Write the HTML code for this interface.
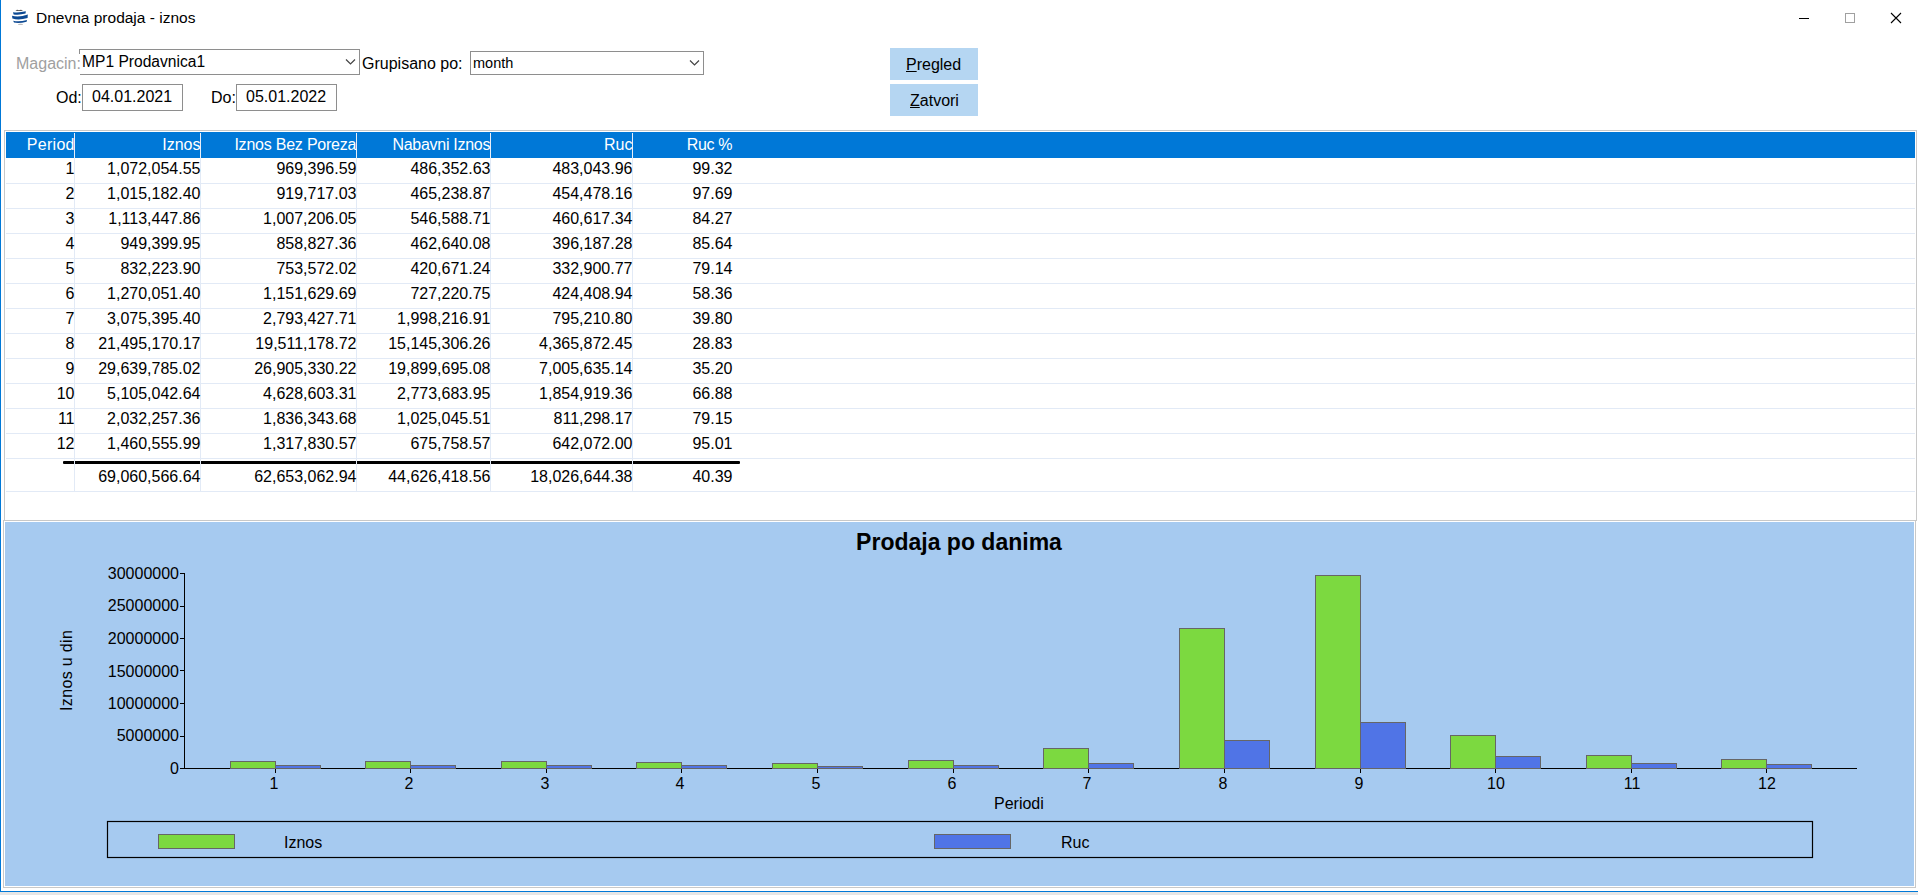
<!DOCTYPE html><html><head><meta charset="utf-8"><style>
*{margin:0;padding:0;box-sizing:border-box}
html,body{width:1918px;height:895px;overflow:hidden;background:#fff}
body{position:relative;font-family:"Liberation Sans",sans-serif;color:#000}
.a{position:absolute;white-space:nowrap}
.t{position:absolute;white-space:nowrap;font-size:16px;line-height:20px}
.r{text-align:right}
.hd{color:#fff}

</style></head><body>
<div class="a" style="left:0;top:0;width:1px;height:892px;background:#0078d7"></div>
<div class="a" style="left:0;top:891px;width:1918px;height:1px;background:#0078d7"></div>
<div class="a" style="left:0;top:892px;width:1918px;height:3px;background:#e6e6e6"></div>
<svg class="a" style="left:8px;top:6px" width="24" height="24" viewBox="0 0 24 24">
<defs><filter id="bl"><feGaussianBlur stdDeviation="0.35"/></filter></defs>
<g filter="url(#bl)">
<path d="M7.4 4.4 Q9 3.4 11 4.2 Q13 3.2 15 4.4 Q11.2 5.4 7.4 4.4Z" fill="#555"/>
<path d="M5 6.2 Q11 7.0 17.8 5.3 L17.6 7.6 Q11 9.4 5.6 8.4 Z" fill="#0b4a93"/>
<path d="M4 9.8 Q11 11.6 19.8 8.6 L19.6 12.0 Q11 14.6 4.4 12.6 Z" fill="#0b4a93"/>
<path d="M5.2 14.8 Q11 16.2 19 14.0 L18.6 15.8 Q11 17.8 6 16.6 Z" fill="#0b4a93"/>
<ellipse cx="12.5" cy="18.3" rx="2.6" ry="0.5" fill="#aaa"/>
</g></svg>
<div class="t" style="left:36px;top:8px;font-size:15.5px">Dnevna prodaja - iznos</div>
<div class="a" style="left:1799px;top:18px;width:10px;height:1px;background:#000"></div>
<div class="a" style="left:1845px;top:13px;width:10px;height:10px;border:1px solid #a0a0a0"></div>
<svg class="a" style="left:1890px;top:12px" width="12" height="12" viewBox="0 0 12 12"><path d="M1 1L11 11M11 1L1 11" stroke="#000" stroke-width="1.1"/></svg>
<div class="a" style="left:79px;top:49px;width:281px;height:26px;border:1px solid #8e8e8e;background:#fff"></div>
<div class="a" style="left:79px;top:54px;width:1px;height:21px;background:#fff"></div>
<div class="t" style="left:16px;top:54px;color:#a0a0a0">Magacin:</div>
<div class="t" style="left:82px;top:52px;font-size:15.6px">MP1 Prodavnica1</div>
<svg class="a" style="left:345px;top:58px" width="12" height="8"><path d="M1 1.5L5.5 6L10 1.5" fill="none" stroke="#444" stroke-width="1.2"/></svg>
<div class="t" style="left:362px;top:54px">Grupisano po:</div>
<div class="a" style="left:470px;top:51px;width:234px;height:24px;border:1px solid #8e8e8e;background:#fff"></div>
<div class="t" style="left:473px;top:53px;font-size:14.5px">month</div>
<svg class="a" style="left:689px;top:59px" width="12" height="8"><path d="M1 1.5L5.5 6L10 1.5" fill="none" stroke="#444" stroke-width="1.2"/></svg>
<div class="a" style="left:890px;top:48px;width:88px;height:32px;background:#b5d6f2"></div>
<div class="a" style="left:890px;top:84px;width:88px;height:32px;background:#b5d6f2"></div>
<div class="t" style="left:906px;top:55px"><u>P</u>regled</div>
<div class="t" style="left:910px;top:91px"><u>Z</u>atvori</div>
<div class="t" style="left:56px;top:88px">Od:</div>
<div class="a" style="left:82px;top:84px;width:101px;height:27px;border:1px solid #8e8e8e"></div>
<div class="t" style="left:92px;top:87px">04.01.2021</div>
<div class="t" style="left:211px;top:88px">Do:</div>
<div class="a" style="left:236px;top:84px;width:101px;height:27px;border:1px solid #8e8e8e"></div>
<div class="t" style="left:246px;top:87px">05.01.2022</div>
<div class="a" style="left:4px;top:130px;width:1913px;height:391px;border:1px solid #c8c8c8;background:#fff"></div>
<div class="a" style="left:6px;top:132px;width:1909px;height:26px;background:#0078d7"></div>
<div class="a" style="left:74px;top:133px;width:1px;height:25px;background:#e8eef8"></div>
<div class="a" style="left:74px;top:158px;width:1px;height:333px;background:#e2eaf6"></div>
<div class="a" style="left:200px;top:133px;width:1px;height:25px;background:#e8eef8"></div>
<div class="a" style="left:200px;top:158px;width:1px;height:333px;background:#e2eaf6"></div>
<div class="a" style="left:356px;top:133px;width:1px;height:25px;background:#e8eef8"></div>
<div class="a" style="left:356px;top:158px;width:1px;height:333px;background:#e2eaf6"></div>
<div class="a" style="left:490px;top:133px;width:1px;height:25px;background:#e8eef8"></div>
<div class="a" style="left:490px;top:158px;width:1px;height:333px;background:#e2eaf6"></div>
<div class="a" style="left:632px;top:133px;width:1px;height:25px;background:#e8eef8"></div>
<div class="a" style="left:632px;top:158px;width:1px;height:333px;background:#e2eaf6"></div>
<div class="a" style="left:6px;top:183px;width:1909px;height:1px;background:#e2eaf6"></div>
<div class="a" style="left:6px;top:208px;width:1909px;height:1px;background:#e2eaf6"></div>
<div class="a" style="left:6px;top:233px;width:1909px;height:1px;background:#e2eaf6"></div>
<div class="a" style="left:6px;top:258px;width:1909px;height:1px;background:#e2eaf6"></div>
<div class="a" style="left:6px;top:283px;width:1909px;height:1px;background:#e2eaf6"></div>
<div class="a" style="left:6px;top:308px;width:1909px;height:1px;background:#e2eaf6"></div>
<div class="a" style="left:6px;top:333px;width:1909px;height:1px;background:#e2eaf6"></div>
<div class="a" style="left:6px;top:358px;width:1909px;height:1px;background:#e2eaf6"></div>
<div class="a" style="left:6px;top:383px;width:1909px;height:1px;background:#e2eaf6"></div>
<div class="a" style="left:6px;top:408px;width:1909px;height:1px;background:#e2eaf6"></div>
<div class="a" style="left:6px;top:433px;width:1909px;height:1px;background:#e2eaf6"></div>
<div class="a" style="left:6px;top:458px;width:1909px;height:1px;background:#e2eaf6"></div>
<div class="a" style="left:6px;top:491px;width:1909px;height:1px;background:#e2eaf6"></div>
<div class="a" style="left:63px;top:461px;width:677px;height:3px;background:#000;border-radius:1px"></div>
<div class="a" style="left:74px;top:461px;width:1px;height:3px;background:#e2eaf6"></div>
<div class="a" style="left:200px;top:461px;width:1px;height:3px;background:#e2eaf6"></div>
<div class="a" style="left:356px;top:461px;width:1px;height:3px;background:#e2eaf6"></div>
<div class="a" style="left:490px;top:461px;width:1px;height:3px;background:#e2eaf6"></div>
<div class="a" style="left:632px;top:461px;width:1px;height:3px;background:#e2eaf6"></div>
<div class="t r hd" style="left:-200px;top:135px;width:274.8px;letter-spacing:0.3px">Period</div>
<div class="t r hd" style="left:-126px;top:135px;width:326.5px">Iznos</div>
<div class="t r hd" style="left:0px;top:135px;width:356.28px;letter-spacing:-0.22px">Iznos Bez Poreza</div>
<div class="t r hd" style="left:156px;top:135px;width:334.22px;letter-spacing:-0.28px">Nabavni Iznos</div>
<div class="t r hd" style="left:290px;top:135px;width:342.5px">Ruc</div>
<div class="t r hd" style="left:432px;top:135px;width:300.16px;letter-spacing:-0.34px">Ruc %</div>
<div class="t r " style="left:-200px;top:159px;width:274.5px">1</div>
<div class="t r " style="left:-126px;top:159px;width:326.5px">1,072,054.55</div>
<div class="t r " style="left:0px;top:159px;width:356.5px">969,396.59</div>
<div class="t r " style="left:156px;top:159px;width:334.5px">486,352.63</div>
<div class="t r " style="left:290px;top:159px;width:342.5px">483,043.96</div>
<div class="t r " style="left:432px;top:159px;width:300.5px">99.32</div>
<div class="t r " style="left:-200px;top:184px;width:274.5px">2</div>
<div class="t r " style="left:-126px;top:184px;width:326.5px">1,015,182.40</div>
<div class="t r " style="left:0px;top:184px;width:356.5px">919,717.03</div>
<div class="t r " style="left:156px;top:184px;width:334.5px">465,238.87</div>
<div class="t r " style="left:290px;top:184px;width:342.5px">454,478.16</div>
<div class="t r " style="left:432px;top:184px;width:300.5px">97.69</div>
<div class="t r " style="left:-200px;top:209px;width:274.5px">3</div>
<div class="t r " style="left:-126px;top:209px;width:326.5px">1,113,447.86</div>
<div class="t r " style="left:0px;top:209px;width:356.5px">1,007,206.05</div>
<div class="t r " style="left:156px;top:209px;width:334.5px">546,588.71</div>
<div class="t r " style="left:290px;top:209px;width:342.5px">460,617.34</div>
<div class="t r " style="left:432px;top:209px;width:300.5px">84.27</div>
<div class="t r " style="left:-200px;top:234px;width:274.5px">4</div>
<div class="t r " style="left:-126px;top:234px;width:326.5px">949,399.95</div>
<div class="t r " style="left:0px;top:234px;width:356.5px">858,827.36</div>
<div class="t r " style="left:156px;top:234px;width:334.5px">462,640.08</div>
<div class="t r " style="left:290px;top:234px;width:342.5px">396,187.28</div>
<div class="t r " style="left:432px;top:234px;width:300.5px">85.64</div>
<div class="t r " style="left:-200px;top:259px;width:274.5px">5</div>
<div class="t r " style="left:-126px;top:259px;width:326.5px">832,223.90</div>
<div class="t r " style="left:0px;top:259px;width:356.5px">753,572.02</div>
<div class="t r " style="left:156px;top:259px;width:334.5px">420,671.24</div>
<div class="t r " style="left:290px;top:259px;width:342.5px">332,900.77</div>
<div class="t r " style="left:432px;top:259px;width:300.5px">79.14</div>
<div class="t r " style="left:-200px;top:284px;width:274.5px">6</div>
<div class="t r " style="left:-126px;top:284px;width:326.5px">1,270,051.40</div>
<div class="t r " style="left:0px;top:284px;width:356.5px">1,151,629.69</div>
<div class="t r " style="left:156px;top:284px;width:334.5px">727,220.75</div>
<div class="t r " style="left:290px;top:284px;width:342.5px">424,408.94</div>
<div class="t r " style="left:432px;top:284px;width:300.5px">58.36</div>
<div class="t r " style="left:-200px;top:309px;width:274.5px">7</div>
<div class="t r " style="left:-126px;top:309px;width:326.5px">3,075,395.40</div>
<div class="t r " style="left:0px;top:309px;width:356.5px">2,793,427.71</div>
<div class="t r " style="left:156px;top:309px;width:334.5px">1,998,216.91</div>
<div class="t r " style="left:290px;top:309px;width:342.5px">795,210.80</div>
<div class="t r " style="left:432px;top:309px;width:300.5px">39.80</div>
<div class="t r " style="left:-200px;top:334px;width:274.5px">8</div>
<div class="t r " style="left:-126px;top:334px;width:326.5px">21,495,170.17</div>
<div class="t r " style="left:0px;top:334px;width:356.5px">19,511,178.72</div>
<div class="t r " style="left:156px;top:334px;width:334.5px">15,145,306.26</div>
<div class="t r " style="left:290px;top:334px;width:342.5px">4,365,872.45</div>
<div class="t r " style="left:432px;top:334px;width:300.5px">28.83</div>
<div class="t r " style="left:-200px;top:359px;width:274.5px">9</div>
<div class="t r " style="left:-126px;top:359px;width:326.5px">29,639,785.02</div>
<div class="t r " style="left:0px;top:359px;width:356.5px">26,905,330.22</div>
<div class="t r " style="left:156px;top:359px;width:334.5px">19,899,695.08</div>
<div class="t r " style="left:290px;top:359px;width:342.5px">7,005,635.14</div>
<div class="t r " style="left:432px;top:359px;width:300.5px">35.20</div>
<div class="t r " style="left:-200px;top:384px;width:274.5px">10</div>
<div class="t r " style="left:-126px;top:384px;width:326.5px">5,105,042.64</div>
<div class="t r " style="left:0px;top:384px;width:356.5px">4,628,603.31</div>
<div class="t r " style="left:156px;top:384px;width:334.5px">2,773,683.95</div>
<div class="t r " style="left:290px;top:384px;width:342.5px">1,854,919.36</div>
<div class="t r " style="left:432px;top:384px;width:300.5px">66.88</div>
<div class="t r " style="left:-200px;top:409px;width:274.5px">11</div>
<div class="t r " style="left:-126px;top:409px;width:326.5px">2,032,257.36</div>
<div class="t r " style="left:0px;top:409px;width:356.5px">1,836,343.68</div>
<div class="t r " style="left:156px;top:409px;width:334.5px">1,025,045.51</div>
<div class="t r " style="left:290px;top:409px;width:342.5px">811,298.17</div>
<div class="t r " style="left:432px;top:409px;width:300.5px">79.15</div>
<div class="t r " style="left:-200px;top:434px;width:274.5px">12</div>
<div class="t r " style="left:-126px;top:434px;width:326.5px">1,460,555.99</div>
<div class="t r " style="left:0px;top:434px;width:356.5px">1,317,830.57</div>
<div class="t r " style="left:156px;top:434px;width:334.5px">675,758.57</div>
<div class="t r " style="left:290px;top:434px;width:342.5px">642,072.00</div>
<div class="t r " style="left:432px;top:434px;width:300.5px">95.01</div>
<div class="t r " style="left:-126px;top:467px;width:326.5px">69,060,566.64</div>
<div class="t r " style="left:0px;top:467px;width:356.5px">62,653,062.94</div>
<div class="t r " style="left:156px;top:467px;width:334.5px">44,626,418.56</div>
<div class="t r " style="left:290px;top:467px;width:342.5px">18,026,644.38</div>
<div class="t r " style="left:432px;top:467px;width:300.5px">40.39</div>
<div class="a" style="left:3px;top:520px;width:1913px;height:368px;border:1px solid #c8c8c8;background:#fff"></div>
<div class="a" style="left:5px;top:522px;width:1909px;height:364px;background:#a6caf0"></div>
<div class="a" style="left:0;top:527px;width:1918px;text-align:center;font-weight:bold;font-size:23px;line-height:30px;padding-left:0px">Prodaja po danima</div>
<svg class="a" style="left:0;top:0" width="1918" height="895" viewBox="0 0 1918 895"><rect x="184" y="573" width="1" height="196" fill="#000"/><rect x="184" y="768" width="1673" height="1" fill="#000"/><rect x="180" y="768" width="4" height="1" fill="#000"/><rect x="180" y="736" width="4" height="1" fill="#000"/><rect x="180" y="703" width="4" height="1" fill="#000"/><rect x="180" y="670" width="4" height="1" fill="#000"/><rect x="180" y="638" width="4" height="1" fill="#000"/><rect x="180" y="606" width="4" height="1" fill="#000"/><rect x="180" y="573" width="4" height="1" fill="#000"/><rect x="230" y="761" width="46" height="8" fill="#666666"/><rect x="231" y="762" width="44" height="6" fill="#7cd940"/><rect x="275" y="765" width="46" height="4" fill="#666666"/><rect x="276" y="766" width="44" height="2" fill="#5074e6"/><rect x="275" y="769" width="1" height="4" fill="#000"/><rect x="365" y="761" width="46" height="8" fill="#666666"/><rect x="366" y="762" width="44" height="6" fill="#7cd940"/><rect x="410" y="765" width="46" height="4" fill="#666666"/><rect x="411" y="766" width="44" height="2" fill="#5074e6"/><rect x="410" y="769" width="1" height="4" fill="#000"/><rect x="501" y="761" width="46" height="8" fill="#666666"/><rect x="502" y="762" width="44" height="6" fill="#7cd940"/><rect x="546" y="765" width="46" height="4" fill="#666666"/><rect x="547" y="766" width="44" height="2" fill="#5074e6"/><rect x="546" y="769" width="1" height="4" fill="#000"/><rect x="636" y="762" width="46" height="7" fill="#666666"/><rect x="637" y="763" width="44" height="5" fill="#7cd940"/><rect x="681" y="765" width="46" height="4" fill="#666666"/><rect x="682" y="766" width="44" height="2" fill="#5074e6"/><rect x="681" y="769" width="1" height="4" fill="#000"/><rect x="772" y="763" width="46" height="6" fill="#666666"/><rect x="773" y="764" width="44" height="4" fill="#7cd940"/><rect x="817" y="766" width="46" height="3" fill="#666666"/><rect x="818" y="767" width="44" height="1" fill="#5074e6"/><rect x="817" y="769" width="1" height="4" fill="#000"/><rect x="908" y="760" width="46" height="9" fill="#666666"/><rect x="909" y="761" width="44" height="7" fill="#7cd940"/><rect x="953" y="765" width="46" height="4" fill="#666666"/><rect x="954" y="766" width="44" height="2" fill="#5074e6"/><rect x="953" y="769" width="1" height="4" fill="#000"/><rect x="1043" y="748" width="46" height="21" fill="#666666"/><rect x="1044" y="749" width="44" height="19" fill="#7cd940"/><rect x="1088" y="763" width="46" height="6" fill="#666666"/><rect x="1089" y="764" width="44" height="4" fill="#5074e6"/><rect x="1088" y="769" width="1" height="4" fill="#000"/><rect x="1179" y="628" width="46" height="141" fill="#666666"/><rect x="1180" y="629" width="44" height="139" fill="#7cd940"/><rect x="1224" y="740" width="46" height="29" fill="#666666"/><rect x="1225" y="741" width="44" height="27" fill="#5074e6"/><rect x="1224" y="769" width="1" height="4" fill="#000"/><rect x="1315" y="575" width="46" height="194" fill="#666666"/><rect x="1316" y="576" width="44" height="192" fill="#7cd940"/><rect x="1360" y="722" width="46" height="47" fill="#666666"/><rect x="1361" y="723" width="44" height="45" fill="#5074e6"/><rect x="1360" y="769" width="1" height="4" fill="#000"/><rect x="1450" y="735" width="46" height="34" fill="#666666"/><rect x="1451" y="736" width="44" height="32" fill="#7cd940"/><rect x="1495" y="756" width="46" height="13" fill="#666666"/><rect x="1496" y="757" width="44" height="11" fill="#5074e6"/><rect x="1495" y="769" width="1" height="4" fill="#000"/><rect x="1586" y="755" width="46" height="14" fill="#666666"/><rect x="1587" y="756" width="44" height="12" fill="#7cd940"/><rect x="1631" y="763" width="46" height="6" fill="#666666"/><rect x="1632" y="764" width="44" height="4" fill="#5074e6"/><rect x="1631" y="769" width="1" height="4" fill="#000"/><rect x="1721" y="759" width="46" height="10" fill="#666666"/><rect x="1722" y="760" width="44" height="8" fill="#7cd940"/><rect x="1766" y="764" width="46" height="5" fill="#666666"/><rect x="1767" y="765" width="44" height="3" fill="#5074e6"/><rect x="1766" y="769" width="1" height="4" fill="#000"/><rect x="107.5" y="821.5" width="1705" height="36" fill="none" stroke="#000" stroke-width="1.2"/><rect x="158.5" y="834.5" width="76" height="14" fill="#7cd940" stroke="#666666"/><rect x="934.5" y="834.5" width="76" height="14" fill="#5074e6" stroke="#666666"/></svg>
<div class="t r" style="left:0;top:759px;width:179px">0</div>
<div class="t r" style="left:0;top:726px;width:179px">5000000</div>
<div class="t r" style="left:0;top:694px;width:179px">10000000</div>
<div class="t r" style="left:0;top:662px;width:179px">15000000</div>
<div class="t r" style="left:0;top:629px;width:179px">20000000</div>
<div class="t r" style="left:0;top:596px;width:179px">25000000</div>
<div class="t r" style="left:0;top:564px;width:179px">30000000</div>
<div class="t" style="left:244px;top:774px;width:60px;text-align:center">1</div>
<div class="t" style="left:379px;top:774px;width:60px;text-align:center">2</div>
<div class="t" style="left:515px;top:774px;width:60px;text-align:center">3</div>
<div class="t" style="left:650px;top:774px;width:60px;text-align:center">4</div>
<div class="t" style="left:786px;top:774px;width:60px;text-align:center">5</div>
<div class="t" style="left:922px;top:774px;width:60px;text-align:center">6</div>
<div class="t" style="left:1057px;top:774px;width:60px;text-align:center">7</div>
<div class="t" style="left:1193px;top:774px;width:60px;text-align:center">8</div>
<div class="t" style="left:1329px;top:774px;width:60px;text-align:center">9</div>
<div class="t" style="left:1466px;top:774px;width:60px;text-align:center">10</div>
<div class="t" style="left:1602px;top:774px;width:60px;text-align:center">11</div>
<div class="t" style="left:1737px;top:774px;width:60px;text-align:center">12</div>
<div class="t" style="left:994px;top:794px">Periodi</div>
<div class="t" style="left:57px;top:711px;letter-spacing:0.35px;transform:rotate(-90deg);transform-origin:0 0">Iznos u din</div>
<div class="t" style="left:284px;top:833px">Iznos</div>
<div class="t" style="left:1061px;top:833px">Ruc</div>
</body></html>
